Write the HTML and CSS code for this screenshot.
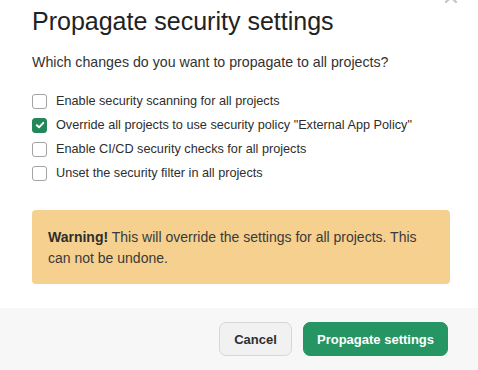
FILE: index.html
```html
<!DOCTYPE html>
<html>
<head>
<meta charset="utf-8">
<link rel="stylesheet" href="styles.css">
</head>
<body>
<div class="modal">
  <button class="close" aria-label="Close">
    <svg width="16" height="16" viewBox="0 0 16 16"><path d="M3 3 L13 13 M13 3 L3 13" stroke="#c8c8c8" stroke-width="2.4" stroke-linecap="round" fill="none"/></svg>
  </button>
  <div class="body">
    <h1 class="title">Propagate security settings</h1>
    <p class="lead">Which changes do you want to propagate to all projects?</p>
    <ul class="options">
      <li class="option"><span class="box"></span><span>Enable security scanning for all projects</span></li>
      <li class="option"><span class="box checked"><svg width="10" height="10" viewBox="0 0 10 10"><path d="M1.8 5.2 L4 7.3 L8.3 2.8" stroke="#fff" stroke-width="1.9" stroke-linecap="round" stroke-linejoin="round" fill="none"/></svg></span><span>Override all projects to use security policy "External App Policy"</span></li>
      <li class="option"><span class="box"></span><span>Enable CI/CD security checks for all projects</span></li>
      <li class="option"><span class="box"></span><span>Unset the security filter in all projects</span></li>
    </ul>
    <div class="warning"><strong>Warning!</strong> This will override the settings for all projects. This can not be undone.</div>
  </div>
  <div class="footer">
    <button class="btn btn-cancel">Cancel</button>
    <button class="btn btn-primary">Propagate settings</button>
  </div>
</div>
</body>
</html>
```
FILE: styles.css
```css
* { box-sizing: border-box; }
html, body { margin: 0; padding: 0; background: #fff; }
body {
  font-family: "Liberation Sans", Arial, sans-serif;
  color: #2e2e2e;
  width: 478px;
  height: 370px;
  overflow: hidden;
}
.modal {
  position: relative;
  display: flex;
  flex-direction: column;
  height: 370px;
}
.close {
  position: absolute;
  top: -11px;
  left: 443px;
  padding: 0;
  border: 0;
  background: none;
}
.body {
  flex: 1;
  padding: 6px 30px 0 32px;
}
.title {
  margin: 0;
  font-size: 25px;
  font-weight: normal;
  line-height: 30px;
  color: #222;
}
.lead {
  margin: 16px 0 0;
  font-size: 14.2px;
  line-height: 20px;
  color: #333;
}
.options {
  list-style: none;
  margin: 20px 0 0;
  padding: 0;
  display: flex;
  flex-direction: column;
  gap: 6px;
}
.option {
  display: flex;
  align-items: center;
  gap: 9px;
  height: 18px;
  font-size: 12.7px;
  color: #2e2e2e;
}
.box {
  width: 15px;
  height: 15px;
  border: 1.5px solid #a3a3a3;
  border-radius: 3px;
  background: #fff;
  display: flex;
  align-items: center;
  justify-content: center;
  flex: none;
}
.box.checked {
  background: #24875a;
  border-color: #24875a;
}
.warning {
  margin-top: 28px;
  margin-right: -2px;
  background: #f5d08f;
  border-radius: 4px;
  padding: 17px 16px 15px;
  font-size: 14px;
  line-height: 21px;
  color: #3a3a3a;
}
.warning strong { color: #2e2e2e; }
.footer {
  height: 62px;
  background: #f7f7f7;
  display: flex;
  justify-content: flex-end;
  align-items: center;
  gap: 11px;
  padding: 0 30px 0 0;
}
.btn {
  font-family: "Liberation Sans", Arial, sans-serif;
  font-size: 13px;
  font-weight: bold;
  height: 34px;
  border-radius: 7px;
  padding: 0;
  white-space: nowrap;
  cursor: pointer;
}
.btn-cancel {
  width: 73px;
  background: #f1f1f1;
  border: 1px solid #d7d7d7;
  color: #2e2e2e;
}
.btn-primary {
  width: 145px;
  background: #249563;
  border: 1px solid #249563;
  color: #fff;
}
```
